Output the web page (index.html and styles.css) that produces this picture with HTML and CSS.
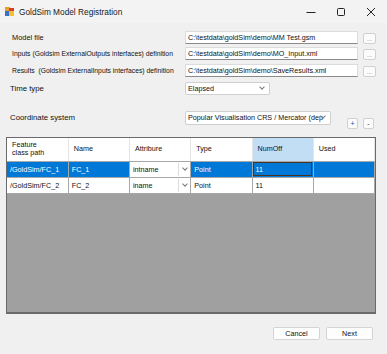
FILE: index.html
```
<!DOCTYPE html>
<html lang="en">

<head>
    <meta charset="UTF-8">
    <link rel="stylesheet" href="styles.css">
    <title>GoldSim Model Registration</title>
</head>

<body>
    <div class="titlebar">
        <svg class="app-icon" width="9" height="9" viewBox="0 0 9 9">
            <rect x="0" y="0" width="5" height="5" fill="#e8a020" />
            <rect x="4" y="1" width="5" height="4" fill="#d83b2b" />
            <rect x="0" y="4" width="5" height="5" fill="#3a6fd0" />
            <rect x="4" y="4" width="5" height="5" fill="#f2c12e" />
        </svg>
        <span class="title">GoldSim Model Registration</span>
        <div class="controls">
            <svg width="10" height="10" viewBox="0 0 10 10"><path d="M0.5 5.5h9" stroke="#222" stroke-width="1" /></svg>
            <svg width="10" height="10" viewBox="0 0 10 10"><rect x="1.5" y="1.5" width="7" height="7" rx="1" fill="none" stroke="#222" stroke-width="1" /></svg>
            <svg width="10" height="10" viewBox="0 0 10 10"><path d="M1 1l8 8M9 1l-8 8" stroke="#222" stroke-width="1" /></svg>
        </div>
    </div>

    <div class="form">
        <div class="row r1">
            <label>Model file</label>
            <div class="textbox">C:\testdata\goldSim\demo\MM Test.gsm</div>
            <div class="dots">...</div>
        </div>
        <div class="row r2">
            <label>Inputs (Goldsim ExternalOutputs interfaces) definition</label>
            <div class="textbox">C:\testdata\goldSim\demo\MO_Input.xml</div>
            <div class="dots">...</div>
        </div>
        <div class="row r3">
            <label>Results&nbsp; (Goldsim ExternalInputs interfaces) definition</label>
            <div class="textbox">C:\testdata\goldSim\demo\SaveResults.xml</div>
            <div class="dots">...</div>
        </div>
        <div class="row r4">
            <label class="narrow">Time type</label>
            <div class="combo small">Elapsed<span class="chev"></span></div>
        </div>
        <div class="row r5">
            <label class="narrow">Coordinate system</label>
            <div class="combo wide">Popular Visualisation CRS / Mercator (dep<span class="chev"></span></div>
            <div class="pm">
                <div class="tiny plus">+</div>
                <div class="tiny">-</div>
            </div>
        </div>
    </div>

    <div class="grid">
        <table>
            <tr class="head">
                <th>Feature<br>class path</th>
                <th>Name</th>
                <th>Attribure</th>
                <th>Type</th>
                <th class="cur">NumOff</th>
                <th>Used</th>
            </tr>
            <tr class="sel">
                <td>/GoldSim/FC_1</td>
                <td>FC_1</td>
                <td class="dd">intname<span class="chev"></span></td>
                <td>Point</td>
                <td class="focus">11</td>
                <td></td>
            </tr>
            <tr>
                <td>/GoldSim/FC_2</td>
                <td>FC_2</td>
                <td class="dd">iname<span class="chev"></span></td>
                <td>Point</td>
                <td>11</td>
                <td></td>
            </tr>
        </table>
    </div>

    <div class="footer">
        <div class="btn">Cancel</div>
        <div class="btn">Next</div>
    </div>
</body>

</html>
```
FILE: styles.css
```
* {
    margin: 0;
    padding: 0;
    box-sizing: border-box;
}

body {
    width: 387px;
    height: 354px;
    background: #f0f0f0;
    font-family: "Liberation Sans", Arial, sans-serif;
    font-size: 7.2px;
    color: #111;
    overflow: hidden;
}

.titlebar {
    height: 23px;
    background: #f3f3f3;
    display: flex;
    align-items: center;
    padding-left: 5px;
}

.app-icon {
    margin-right: 5px;
}

.title {
    font-size: 8.3px;
    color: #1a1a1a;
}

.controls {
    margin-left: auto;
    display: flex;
    gap: 20px;
    padding-right: 11px;
}

.form {
    padding-top: 8px;
}

.row {
    display: flex;
    align-items: center;
    white-space: nowrap;
}

.row label {
    width: 185px;
    padding-left: 12px;
    font-size: 6.8px;
}

.row label.narrow {
    padding-left: 10px;
    font-size: 7.8px;
}

.r1 label {
    font-size: 7.4px;
}

.r2 {
    margin-top: 3px;
}

.r3 {
    margin-top: 4px;
}

.r4 {
    margin-top: 5px;
}

.r5 {
    margin-top: 16px;
    align-items: flex-start;
}

.r5 label {
    line-height: 14px;
}

.textbox {
    width: 173px;
    height: 13px;
    background: #fff;
    border: 1px solid #dcdcdc;
    border-bottom-color: #8a8a8a;
    padding-left: 2px;
    line-height: 11px;
    overflow: hidden;
}

.dots {
    width: 13px;
    height: 11px;
    margin-left: 5px;
    margin-top: 2px;
    background: #fbfbfb;
    border: 1px solid #d0d0d0;
    border-radius: 2px;
    color: #777;
    font-size: 6px;
    line-height: 10px;
    text-align: center;
}

.combo {
    position: relative;
    height: 13px;
    background: #fff;
    border: 1px solid #cfcfcf;
    border-radius: 2px;
    padding: 0 14px 0 2px;
    line-height: 11px;
    overflow: hidden;
}

.combo.small {
    width: 85px;
}

.combo.wide {
    width: 146px;
    height: 14px;
    line-height: 12px;
}

.chev {
    position: absolute;
    right: 5px;
    top: 2px;
    width: 4px;
    height: 4px;
    border-right: 1px solid #777;
    border-bottom: 1px solid #777;
    transform: rotate(45deg);
}

.pm {
    display: flex;
    gap: 5px;
    margin-left: 16px;
    margin-top: 7px;
}

.tiny {
    width: 11px;
    height: 11px;
    background: #fbfbfb;
    border: 1px solid #d0d0d0;
    border-radius: 2px;
    font-size: 7px;
    line-height: 9px;
    text-align: center;
    color: #333;
}

.tiny.plus {
    color: #1a4fa0;
}

.grid {
    margin: 8px 0 0 6px;
    width: 370px;
    height: 177px;
    background: #a0a0a0;
    border: 1px solid #6a6a6a;
    border-bottom-width: 2px;
}

table {
    border-collapse: collapse;
    table-layout: fixed;
    width: 368px;
}

th {
    height: 23px;
    background: #fff;
    font-weight: normal;
    text-align: left;
    vertical-align: middle;
    padding: 0 0 0 5px;
    line-height: 8px;
    width: 61px;
    border-right: 1px solid #e4e4e4;
    border-bottom: 1px solid #a8a8a8;
}

th.cur {
    background: #c2def5;
}

td {
    height: 16px;
    background: #fff;
    padding-left: 3px;
    white-space: nowrap;
    overflow: hidden;
    border-right: 1px solid #a8a8a8;
    border-bottom: 1px solid #a8a8a8;
}

tr.sel td {
    background: #0078d7;
    color: #fff;
}

tr.sel td.dd,
td.dd {
    position: relative;
    background: #fff;
    color: #111;
}

td.dd .chev {
    right: 3px;
    top: 4px;
}

td.dd::after {
    content: "";
    position: absolute;
    right: 11px;
    top: 1px;
    bottom: 1px;
    border-left: 1px solid #dcdcdc;
}

tr.sel td.focus {
    outline: 1px solid #4a3420;
    outline-offset: -2px;
}

.footer {
    display: flex;
    justify-content: flex-end;
    gap: 6px;
    padding: 13px 14px 0 0;
}

.btn {
    width: 47px;
    height: 13px;
    background: #fdfdfd;
    border: 1px solid #d4d4d4;
    border-radius: 2px;
    text-align: center;
    line-height: 11px;
}
```
